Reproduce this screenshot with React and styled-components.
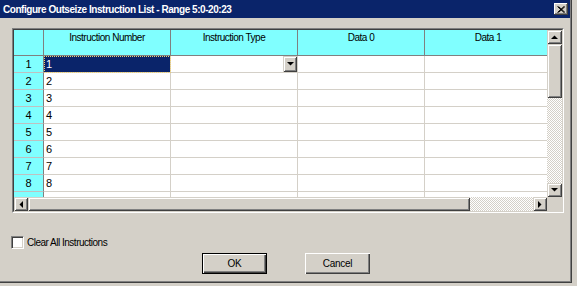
import React from "react"
import styled, { createGlobalStyle, css } from "styled-components"

const GlobalStyle = createGlobalStyle`
  html, body {
    margin: 0;
    padding: 0;
    background: #d4d0c8;
  }
  body {
    width: 577px;
    height: 286px;
    overflow: hidden;
    font-family: "Liberation Sans", Arial, sans-serif;
  }
`

const raised = css`
  background: #d4d0c8;
  box-shadow: inset 1px 1px #d4d0c8, inset -1px -1px #404040,
    inset 2px 2px #ffffff, inset -2px -2px #808080;
`

const Window = styled.div`
  width: 572px;
  height: 283px;
  box-sizing: border-box;
  background: #d4d0c8;
  border-right: 1px solid #404040;
  border-bottom: 1px solid #404040;
  box-shadow: inset -1px -1px #808080;
  display: flex;
  flex-direction: column;
`

const TitleBar = styled.div`
  height: 18px;
  margin-right: 1px;
  background: #0a246a;
  display: flex;
  align-items: center;
  justify-content: space-between;
  padding: 0 2px 0 3px;
  color: #fff;
  font-weight: bold;
  font-size: 10px;
  letter-spacing: -0.45px;
  white-space: nowrap;
`

const CloseButton = styled.div`
  background: #d4d0c8;
  box-shadow: inset -1px -1px #404040, inset 1px 1px #ffffff,
    inset -2px -2px #808080;
  width: 14px;
  height: 12px;
  display: flex;
  align-items: center;
  justify-content: center;
`

const Body = styled.div`
  padding: 10px 0 0 12px;
  display: flex;
  flex-direction: column;
`

const Frame = styled.div`
  width: 552px;
  box-sizing: border-box;
  border: 1px solid;
  border-color: #808080 #ffffff #ffffff #808080;
`

const FrameInner = styled.div`
  border: 1px solid;
  border-color: #404040 #d4d0c8 #d4d0c8 #404040;
  display: grid;
  grid-template-columns: 533px 15px;
  grid-template-rows: 167px 14px;
`

const Viewport = styled.div`
  overflow: hidden;
  background: #fff;
`

const Table = styled.div`
  display: grid;
  grid-template-columns: 30px repeat(4, 127px);
  grid-auto-rows: 17px;
  grid-template-rows: 26px;
  width: 538px;
`

const HeadCell = styled.div`
  box-sizing: border-box;
  background: #80ffff;
  border-right: 1px solid #808080;
  border-bottom: 1px solid #808080;
  font-size: 10px;
  letter-spacing: -0.5px;
  line-height: 13px;
  padding-top: 1px;
  text-align: center;
  color: #000;
  white-space: nowrap;
`

const RowHead = styled.div`
  box-sizing: border-box;
  background: #80ffff;
  border-right: 1px solid #808080;
  border-bottom: 1px solid #c0c0c0;
  font-size: 11px;
  line-height: 16px;
  text-align: center;
  color: #000;
`

const Cell = styled.div`
  box-sizing: border-box;
  border-right: 1px solid #d4d0c8;
  border-bottom: 1px solid #d4d0c8;
  font-size: 11px;
  line-height: 16px;
  padding-left: 2px;
  display: flex;
  justify-content: space-between;
  background: ${({ $selected }) => ($selected ? "#0a246a" : "#fff")};
  color: ${({ $selected }) => ($selected ? "#fff" : "#000")};
  outline: ${({ $selected }) => ($selected ? "1px dotted #f0d070" : "none")};
  outline-offset: -1px;
  white-space: nowrap;
  overflow: hidden;
`

const DropButton = styled.div`
  ${raised};
  width: 14px;
  height: 16px;
  flex: none;
  display: flex;
  align-items: center;
  justify-content: center;
`

const VScroll = styled.div`
  display: flex;
  flex-direction: column;
`

const HScroll = styled.div`
  display: flex;
`

const ArrowButton = styled.div`
  ${raised};
  flex: none;
  width: ${({ $w }) => $w}px;
  height: ${({ $h }) => $h}px;
  display: flex;
  align-items: center;
  justify-content: center;
`

const Thumb = styled.div`
  ${raised};
  flex: none;
  width: ${({ $w }) => ($w ? `${$w}px` : "auto")};
  height: ${({ $h }) => ($h ? `${$h}px` : "auto")};
`

const Track = styled.div`
  flex: 1;
  background-color: #ffffff;
  background-image: conic-gradient(
    #d4d0c8 25%,
    #ffffff 0 50%,
    #d4d0c8 0 75%,
    #ffffff 0
  );
  background-size: 2px 2px;
`

const Corner = styled.div`
  background: #d4d0c8;
`

const CheckRow = styled.label`
  display: flex;
  align-items: center;
  gap: 3px;
  margin: 23px 0 0 -1px;
  height: 13px;
  font-size: 10px;
  letter-spacing: -0.5px;
  color: #000;
`

const CheckBox = styled.span`
  width: 13px;
  height: 13px;
  box-sizing: border-box;
  background: #fff;
  border: 1px solid;
  border-color: #808080 #ffffff #ffffff #808080;
  box-shadow: inset 1px 1px #404040, inset -1px -1px #d4d0c8;
`

const ButtonRow = styled.div`
  display: flex;
  justify-content: center;
  gap: 38px;
  margin: 4px 0 0 -12px;
  width: 572px;
`

const PushButton = styled.div`
  width: 65px;
  height: 21px;
  box-sizing: border-box;
  background: #d4d0c8;
  font-size: 10px;
  letter-spacing: -0.3px;
  display: flex;
  align-items: center;
  justify-content: center;
  color: #000;
  box-shadow: inset 1px 1px #ffffff, inset -1px -1px #404040,
    inset -2px -2px #808080;
  border: ${({ $default }) => ($default ? "1px solid #000" : "none")};
`

const Arrow = ({ dir }) => {
  const pts = {
    up: "0,4 7,4 3.5,0.5",
    down: "0,0 7,0 3.5,3.5",
    left: "4,0 4,7 0.5,3.5",
    right: "0,0 0,7 3.5,3.5",
  }[dir]
  const vertical = dir === "up" || dir === "down"
  return (
    <svg width={vertical ? 7 : 4} height={vertical ? 4 : 7}>
      <polygon points={pts} fill="#000" />
    </svg>
  )
}

const columns = ["Instruction Number", "Instruction Type", "Data 0", "Data 1"]
const rows = [1, 2, 3, 4, 5, 6, 7, 8]

export default function App() {
  return (
    <>
      <GlobalStyle />
      <Window>
        <TitleBar>
          <span>Configure Outseize Instruction List - Range 5:0-20:23</span>
          <CloseButton>
            <svg width="8" height="7" viewBox="0 0 8 7">
              <path
                d="M0.5 0.5 L7 6.5 M1.5 0.5 L8 6.5 M7 0.5 L0.5 6.5 M8 0.5 L1.5 6.5"
                stroke="#000"
                strokeWidth="1"
              />
            </svg>
          </CloseButton>
        </TitleBar>
        <Body>
          <Frame>
            <FrameInner>
              <Viewport>
                <Table>
                  <HeadCell />
                  {columns.map(c => (
                    <HeadCell key={c}>{c}</HeadCell>
                  ))}
                  {rows.map(r => (
                    <React.Fragment key={r}>
                      <RowHead>{r}</RowHead>
                      <Cell $selected={r === 1}>{r}</Cell>
                      <Cell>
                        <span />
                        {r === 1 && (
                          <DropButton>
                            <Arrow dir="down" />
                          </DropButton>
                        )}
                      </Cell>
                      <Cell />
                      <Cell />
                    </React.Fragment>
                  ))}
                  {/* next row, only its top edge shows */}
                  <RowHead />
                  <Cell />
                  <Cell />
                  <Cell />
                  <Cell />
                </Table>
              </Viewport>
              <VScroll>
                <ArrowButton $w={15} $h={14}>
                  <Arrow dir="up" />
                </ArrowButton>
                <Thumb $h={54} />
                <Track />
                <ArrowButton $w={15} $h={14}>
                  <Arrow dir="down" />
                </ArrowButton>
              </VScroll>
              <HScroll>
                <ArrowButton $w={14} $h={14}>
                  <Arrow dir="left" />
                </ArrowButton>
                <Thumb $w={442} />
                <Track />
                <ArrowButton $w={14} $h={14}>
                  <Arrow dir="right" />
                </ArrowButton>
              </HScroll>
              <Corner />
            </FrameInner>
          </Frame>
          <CheckRow>
            <CheckBox />
            Clear All Instructions
          </CheckRow>
          <ButtonRow>
            <PushButton $default>OK</PushButton>
            <PushButton>Cancel</PushButton>
          </ButtonRow>
        </Body>
      </Window>
    </>
  )
}
